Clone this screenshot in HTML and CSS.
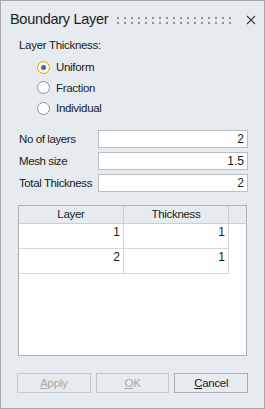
FILE: index.html
```html
<!DOCTYPE html>
<html lang="en">
<head>
    <meta charset="UTF-8">
    <title>Boundary Layer</title>
    <link rel="stylesheet" href="styles.css">
</head>
<body>
    <div class="window">
        <div class="title-bar">
            <span class="title">Boundary Layer</span>
            <svg class="grip" width="117" height="7" viewBox="0 0 117 7">
                <defs>
                    <pattern id="dots" width="7" height="5" patternUnits="userSpaceOnUse">
                        <rect width="2" height="2" fill="#8e9396"/>
                    </pattern>
                </defs>
                <rect width="117" height="7" fill="url(#dots)"/>
            </svg>
            <svg class="close" width="10" height="10" viewBox="0 0 10 10">
                <path d="M1 1 L9 9 M9 1 L1 9" stroke="#3c3c3c" stroke-width="1.1" fill="none"/>
            </svg>
        </div>

        <div class="content">
            <div class="group-label">Layer Thickness:</div>
            <div class="radio-list">
                <label class="radio-row"><span class="radio checked"></span>Uniform</label>
                <label class="radio-row"><span class="radio"></span>Fraction</label>
                <label class="radio-row"><span class="radio"></span>Individual</label>
            </div>

            <div class="fields">
                <div class="field-row">
                    <span class="field-label">No of layers</span>
                    <div class="field-input">2</div>
                </div>
                <div class="field-row">
                    <span class="field-label">Mesh size</span>
                    <div class="field-input">1.5</div>
                </div>
                <div class="field-row">
                    <span class="field-label">Total Thickness</span>
                    <div class="field-input">2</div>
                </div>
            </div>

            <div class="grid">
                <div class="grid-header">
                    <div class="hcell col-layer">Layer</div>
                    <div class="hcell col-thick">Thickness</div>
                    <div class="hcell col-rest"></div>
                </div>
                <div class="grid-row">
                    <div class="cell col-layer">1</div>
                    <div class="cell col-thick">1</div>
                </div>
                <div class="grid-row">
                    <div class="cell col-layer">2</div>
                    <div class="cell col-thick">1</div>
                </div>
            </div>

            <div class="buttons">
                <button class="btn" disabled><u>A</u>pply</button>
                <button class="btn" disabled><u>O</u>K</button>
                <button class="btn"><u>C</u>ancel</button>
            </div>
        </div>
    </div>
</body>
</html>
```

FILE: styles.css
```css
* {
    box-sizing: border-box;
}

body {
    margin: 0;
    font-family: 'Liberation Sans', Arial, sans-serif;
    font-size: 11.5px;
    color: #1b1b1b;
}

.window {
    width: 265px;
    height: 409px;
    border: 1px solid #a3a9ad;
    background: #e5ebef;
    display: flex;
    flex-direction: column;
}

.title-bar {
    height: 37px;
    display: flex;
    align-items: center;
    padding-left: 9px;
    padding-bottom: 1px;
}

.title {
    font-size: 14.5px;
    letter-spacing: -0.3px;
    color: #1d1d1d;
    width: 107px;
}

.grip {
    display: block;
    margin-top: 3px;
}

.close {
    display: block;
    margin-left: 12px;
    margin-top: 1px;
}

.content {
    flex: 1;
    display: flex;
    flex-direction: column;
    padding: 0 16px 0 17px;
}

.group-label {
    height: 15px;
    line-height: 15px;
    padding-left: 1px;
    letter-spacing: -0.3px;
}

.radio-list {
    margin-top: 4px;
    padding-left: 19px;
}

.radio-row {
    display: flex;
    align-items: center;
    height: 20.5px;
    letter-spacing: -0.3px;
}

.radio {
    width: 13px;
    height: 13px;
    border-radius: 50%;
    border: 1px solid #8c9196;
    background: #ffffff;
    margin-right: 6px;
    display: flex;
    align-items: center;
    justify-content: center;
}

.radio.checked {
    border-color: #d9a31b;
    background: #fff6dc;
}

.radio.checked::after {
    content: "";
    width: 5px;
    height: 5px;
    border-radius: 50%;
    background: #2a6fc9;
}

.fields {
    margin-top: 11px;
    display: flex;
    flex-direction: column;
    gap: 4px;
}

.field-row {
    display: flex;
    align-items: center;
    height: 18px;
}

.field-label {
    width: 80px;
    padding-left: 1px;
    letter-spacing: -0.4px;
    white-space: nowrap;
}

.field-input {
    flex: 1;
    height: 18px;
    background: #ffffff;
    border: 1px solid #b9bec2;
    text-align: right;
    padding-right: 3px;
    line-height: 16px;
    font-size: 12px;
}

.grid {
    margin-top: 13px;
    margin-right: 1px;
    height: 151px;
    background: #ffffff;
    border: 1px solid #acb2b6;
}

.grid-header {
    display: flex;
    height: 18px;
    background: #e5ebef;
    border-bottom: 1px solid #c9cfd3;
}

.hcell {
    text-align: center;
    line-height: 17px;
    letter-spacing: -0.3px;
    border-right: 1px solid #c9cfd3;
}

.col-layer {
    width: 105px;
}

.col-thick {
    width: 105px;
}

.col-rest {
    flex: 1;
    border-right: none;
}

.grid-row {
    display: flex;
    height: 25px;
}

.cell {
    text-align: right;
    padding-right: 3px;
    line-height: 16px;
    font-size: 12px;
    border-right: 1px solid #d7d7d7;
    border-bottom: 1px solid #d7d7d7;
}

.buttons {
    margin-top: 17px;
    margin-left: -1px;
    display: flex;
    gap: 5px;
}

.btn {
    width: 74px;
    height: 20px;
    font-family: inherit;
    font-size: 11.5px;
    letter-spacing: -0.3px;
    color: #1b1b1b;
    background: #e5ebef;
    border: 1px solid #a9aeb2;
    border-radius: 0;
    padding: 0;
}

.btn:disabled {
    color: #a4a8ab;
    border-color: #c3c8cc;
}
```
